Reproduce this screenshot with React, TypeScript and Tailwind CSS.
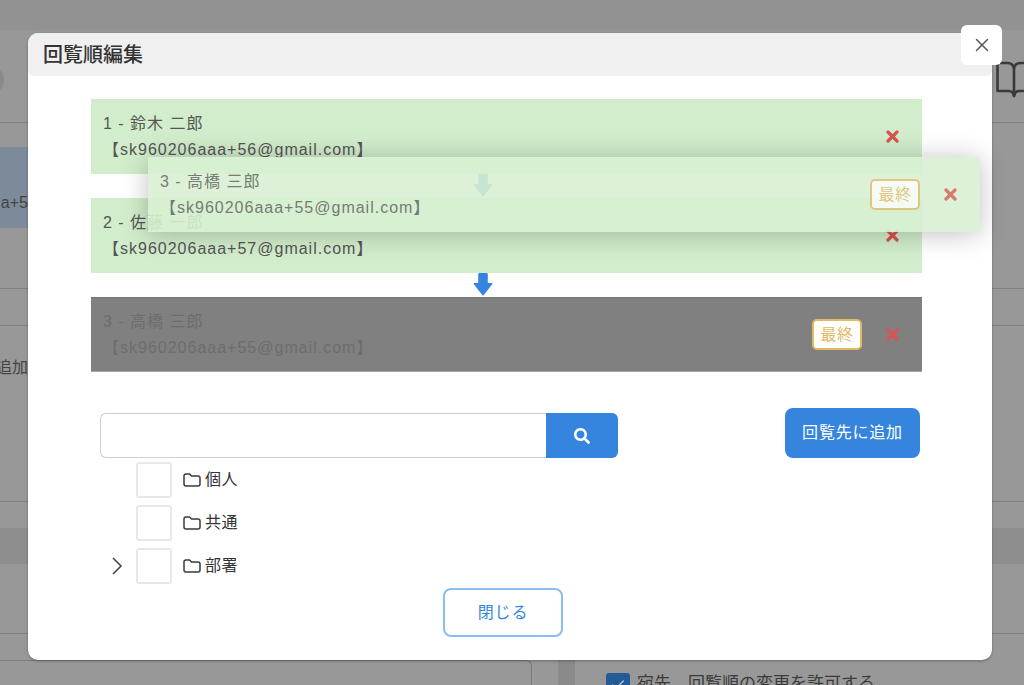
import { Check, X } from "lucide-react";
import { FaSearch } from "react-icons/fa";

const FONT = "[font-family:'Liberation_Sans','Noto_Sans_CJK_JP',sans-serif]";

function DownArrow() {
  return (
    <svg width="20" height="23" viewBox="0 0 20 23" className="-mt-[2px]">
      <path d="M5.2 1.2 Q5.2 0 6.4 0 H13.6 Q14.8 0 14.8 1.2 V10 H18.8 Q20 10 19.2 11.2 L10.6 22.2 Q10 23 9.4 22.2 L0.8 11.2 Q0 10 1.2 10 H5.2 Z" fill="#3584de" />
    </svg>
  );
}

function RemoveIcon() {
  return (
    <svg width="13" height="13" viewBox="0 0 13 13" className="shrink-0">
      <path d="M2 2 L11 11 M11 2 L2 11" stroke="#d9534f" strokeWidth="3.2" strokeLinecap="round" />
    </svg>
  );
}

function BookIcon() {
  return (
    <svg width="36" height="37" viewBox="0 0 36 37" className="-mr-2 mt-[31px] shrink-0" fill="none" stroke="#3a3a3a" strokeWidth="2.6" strokeLinejoin="round" strokeLinecap="round">
      <path d="M1.5 2 H11 Q18 2 18 9 V35 M34.5 2 H25 Q18 2 18 9" />
      <path d="M1.5 2 V30 H13 Q17 30 18 35 Q19 30 23 30 H34.5 V2" />
    </svg>
  );
}

function LastBadge() {
  return (
    <span className="mr-6 flex h-[31px] w-[50px] items-center justify-center rounded-[5px] border-[2.5px] border-[#e3b95f] bg-white text-base tracking-[0.5px] text-[#e3b95f]">
      最終
    </span>
  );
}

function Row({ name, mail, last, dark, ghost }: { name: string; mail: string; last?: boolean; dark?: boolean; ghost?: boolean }) {
  const look = dark
    ? "border-y border-t-[#757575] border-b-[#a5a5a5] bg-[#808080] text-[#6d6d6d]"
    : ghost
      ? "text-[#555] opacity-75"
      : "bg-[#d1edcb] text-[#555]";
  return (
    <div className={`flex h-[75px] items-center pl-3 pr-[23px] ${look}`}>
      <div className="flex-1 text-base leading-[26px] tracking-[1px]">
        <p>{name}</p>
        <p>【{mail}】</p>
      </div>
      {last && <LastBadge />}
      <RemoveIcon />
    </div>
  );
}

function TreeRow({ label, open }: { label: string; open?: boolean }) {
  return (
    <div className="mb-[7px] flex h-9 items-center text-base tracking-[0.4px] text-[#333]">
      <div className="flex w-9 justify-center pr-[3px]">
        {open && (
          <svg width="12" height="18" viewBox="0 0 12 18">
            <path d="M2 1 L10 9 L2 17" fill="none" stroke="#444" strokeWidth="1.6" />
          </svg>
        )}
      </div>
      <div className="h-9 w-9 rounded-[3px] border-2 border-[#e8e8e8] bg-white" />
      <svg width="18" height="14" viewBox="0 0 18 14" className="ml-[11px] mr-[4px]">
        <path d="M1 3 Q1 1 3 1 H6.5 L8.5 3 H15 Q17 3 17 5 V11 Q17 13 15 13 H3 Q1 13 1 11 Z" fill="none" stroke="#3a3a3a" strokeWidth="1.5" />
      </svg>
      <span>{label}</span>
    </div>
  );
}

export default function App() {
  return (
    <div className={`relative h-[685px] w-[1024px] overflow-hidden bg-[#989898] ${FONT}`}>
      {/* page behind the overlay */}
      <div className="h-[30px] bg-[#929292]" />
      <div className="flex h-[93px] items-start justify-between border-b border-[#808080]">
        <div className="-ml-[20px] mt-[37px] h-[26px] w-[24px] rounded-full bg-[#8a8a8a]" />
        <BookIcon />
      </div>
      <div className="h-[166px] border-b border-[#808080] pt-[24px]">
        <div className="flex h-[81px] w-[28px] items-end justify-end overflow-hidden bg-[#7c8a99] pb-[13px] text-base text-[#444]">
          <span className="whitespace-nowrap">a+5</span>
        </div>
      </div>
      <div className="h-[37px] border-b border-[#808080]" />
      <div className="h-[176px] border-b border-[#808080] pt-[30px]">
        <div className="flex w-[28px] justify-end overflow-hidden text-base text-[#444]">
          <span className="whitespace-nowrap">追加</span>
        </div>
      </div>
      <div className="h-[26px]" />
      <div className="h-[36px] bg-[#8e8e8e]" />
      <div className="h-[70px] border-b border-[#808080]" />
      <div className="flex h-[52px]">
        <div className="mt-[26px] h-[40px] w-[532px] rounded-tr-md border-r border-t border-[#7c7c7c]" />
        <div className="ml-[26px] h-full w-[17px] bg-[#8a8a8a]" />
        <div className="ml-[31px] mt-[39px] flex h-[24px] w-[24px] items-center justify-center rounded-[3px] bg-[#245a96]">
          <Check size={16} color="#b9c4d1" />
        </div>
        <span className="ml-[7px] mt-[38px] whitespace-nowrap text-[17px] leading-[24px] text-[#3a3a3a]">宛先、回覧順の変更を許可する</span>
      </div>

      {/* modal */}
      <div className="absolute left-[28px] top-[33px] h-[627px] w-[964px] rounded-[10px] bg-white shadow-[0_1px_3px_rgba(0,0,0,0.3)]">
        <div className="flex h-[43px] items-center rounded-t-[10px] rounded-b-[6px] bg-[#f0f0f0] pl-[15px] text-xl font-medium text-[#333]">
          回覧順編集
        </div>

        <div className="ml-[63px] mt-[23px] w-[831px]">
          <Row name="1 - 鈴木 二郎" mail="sk960206aaa+56@gmail.com" />
          <div className="flex h-6 items-center pl-[382px]">
            <DownArrow />
          </div>
          <Row name="2 - 佐藤 一郎" mail="sk960206aaa+57@gmail.com" />
          <div className="flex h-6 items-center pl-[382px]">
            <DownArrow />
          </div>
          <Row name="3 - 高橋 三郎" mail="sk960206aaa+55@gmail.com" last dark />
        </div>

        <div className="mx-[72px] mt-[36px] flex items-end justify-between">
          <div className="flex h-[45px] w-[518px]">
            <div className="flex-1 rounded-l-md border border-r-0 border-[#cfcfcf] bg-white" />
            <div className="flex w-[72px] items-center justify-center rounded-r-md bg-[#3584de]">
              <FaSearch size={16} color="#fff" />
            </div>
          </div>
          <button className="h-[50px] w-[135px] rounded-lg bg-[#3584de] text-base tracking-[0.8px] text-white">回覧先に追加</button>
        </div>

        <div className="ml-[72px] mt-[4px]">
          <TreeRow label="個人" />
          <TreeRow label="共通" />
          <TreeRow label="部署" open />
        </div>

        <button className="ml-[415px] mt-[-3px] h-[49px] w-[120px] rounded-lg border-2 border-[#8cbcf0] bg-white text-base tracking-[0.8px] text-[#3584de]">閉じる</button>

        {/* close button */}
        <button className="absolute left-[933px] top-[-8px] flex h-[40px] w-[41px] items-center justify-center rounded-md bg-white">
          <X size={22} strokeWidth={1.6} color="#555" />
        </button>

        {/* row being dragged */}
        <div className="absolute left-[120px] top-[124px] w-[832px] bg-[#d8f0d3]/90 shadow-[0_2px_24px_rgba(0,0,0,0.25)]">
          <Row name="3 - 高橋 三郎" mail="sk960206aaa+55@gmail.com" last ghost />
        </div>
      </div>
    </div>
  );
}
